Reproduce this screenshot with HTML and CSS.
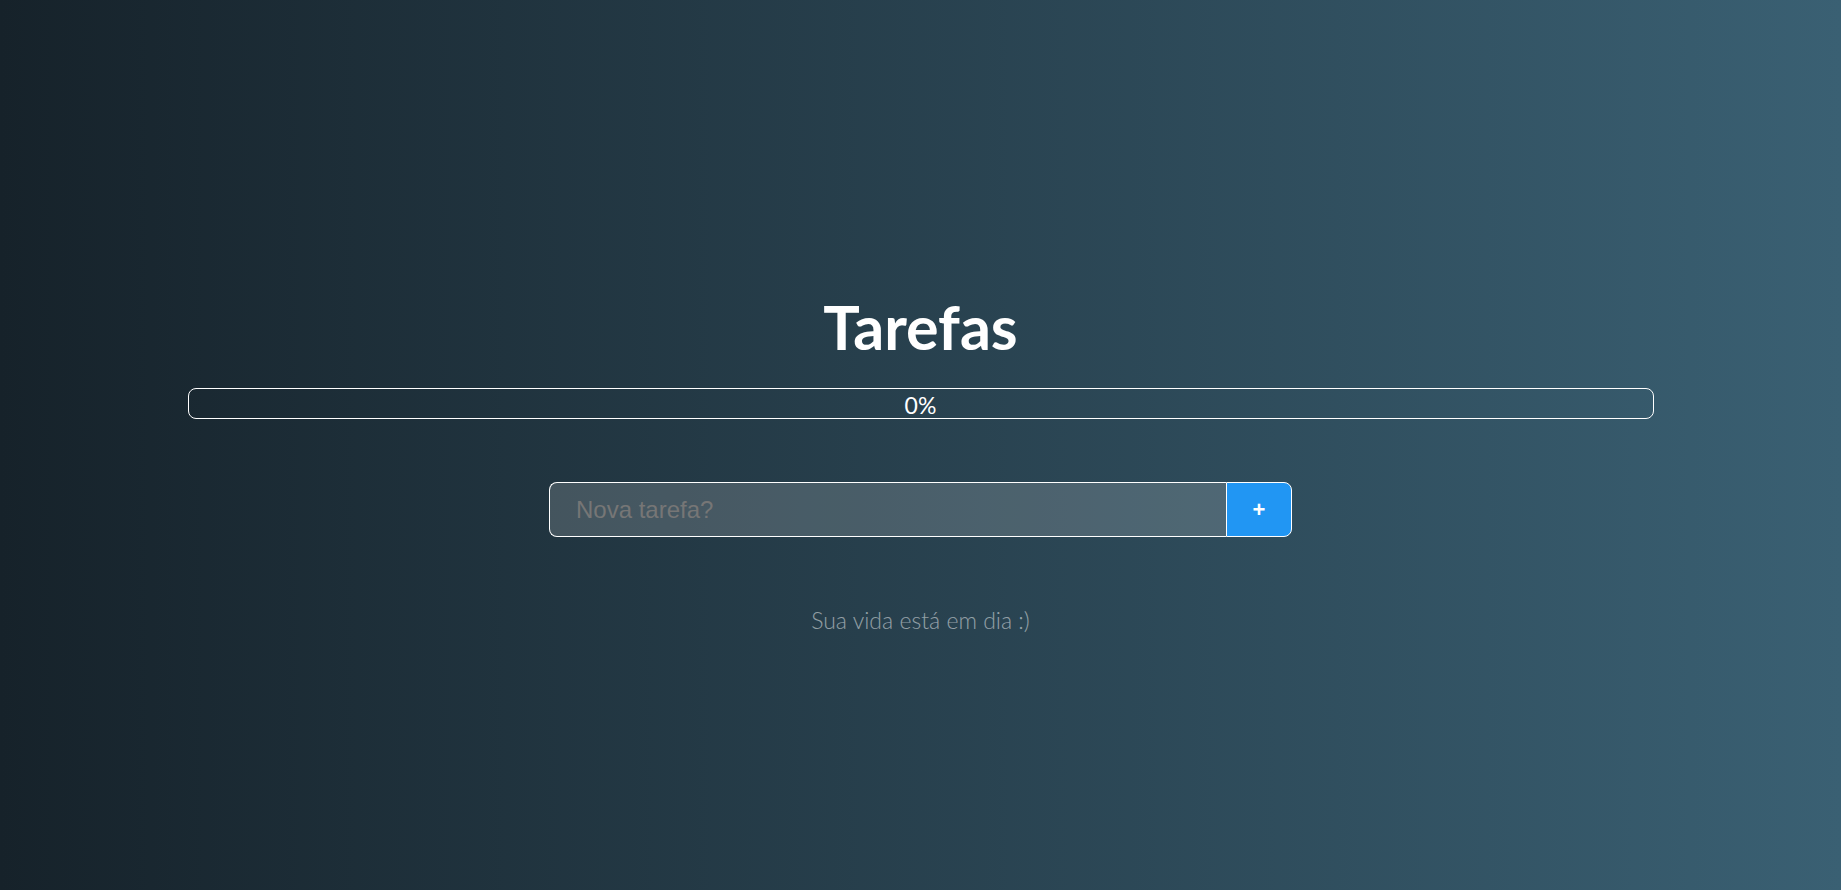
FILE: index.html
```html
<!DOCTYPE html>
<html lang="pt-BR">
<head>
<meta charset="utf-8">
<title>Tarefas</title>
<link rel="stylesheet" href="styles.css">
</head>
<body>
<main class="app">
  <h1 class="title">Tarefas</h1>
  <div class="progress"><span class="progress-label">0%</span></div>
  <form class="new-task">
    <input class="new-task-input" type="text" placeholder="Nova tarefa?">
    <button class="new-task-btn" type="button">+</button>
  </form>
  <p class="empty">Sua vida está em dia :)</p>
</main>
</body>
</html>
```

FILE: styles.css
```css
html, body {
  margin: 0;
  height: 100%;
}
body {
  background: linear-gradient(to right, #16222a, #3a6073);
  color: #fff;
  font-family: Lato, "Liberation Sans", sans-serif;
}
.app {
  display: flex;
  flex-direction: column;
  align-items: center;
  padding-top: 290px;
}
.title {
  margin: 0;
  font-family: Lato, sans-serif;
  font-weight: 700;
  font-size: 61px;
  line-height: 73px;
}
.progress {
  box-sizing: border-box;
  width: 1466px;
  height: 31px;
  margin-top: 25px;
  border: 1px solid #fff;
  border-radius: 8px;
  display: flex;
  align-items: center;
  justify-content: center;
}
.progress-label {
  font-family: Lato, sans-serif;
  font-weight: 400;
  font-size: 23px;
  line-height: 1;
  padding-top: 3px;
}
.new-task {
  display: flex;
  margin-top: 63px;
  height: 55px;
}
.new-task-input {
  box-sizing: border-box;
  width: 677px;
  height: 55px;
  margin: 0;
  padding: 0 26px;
  border: 1px solid #fff;
  border-right: none;
  border-radius: 8px 0 0 8px;
  background: rgba(255, 255, 255, 0.16);
  color: #fff;
  font-family: "Liberation Sans", Arial, sans-serif;
  font-size: 24px;
  outline: none;
}
.new-task-input::placeholder {
  color: #767676;
}
.new-task-btn {
  box-sizing: border-box;
  width: 66px;
  height: 55px;
  margin: 0;
  border: 1px solid #fff;
  border-radius: 0 8px 8px 0;
  background: #2196f3;
  color: #fff;
  font-family: "Liberation Sans", Arial, sans-serif;
  font-size: 22px;
  font-weight: 700;
  cursor: pointer;
}
.empty {
  margin: 69px 0 0;
  font-family: Lato, sans-serif;
  font-weight: 300;
  font-size: 23px;
  line-height: 28px;
  color: rgba(255, 255, 255, 0.5);
}
```
